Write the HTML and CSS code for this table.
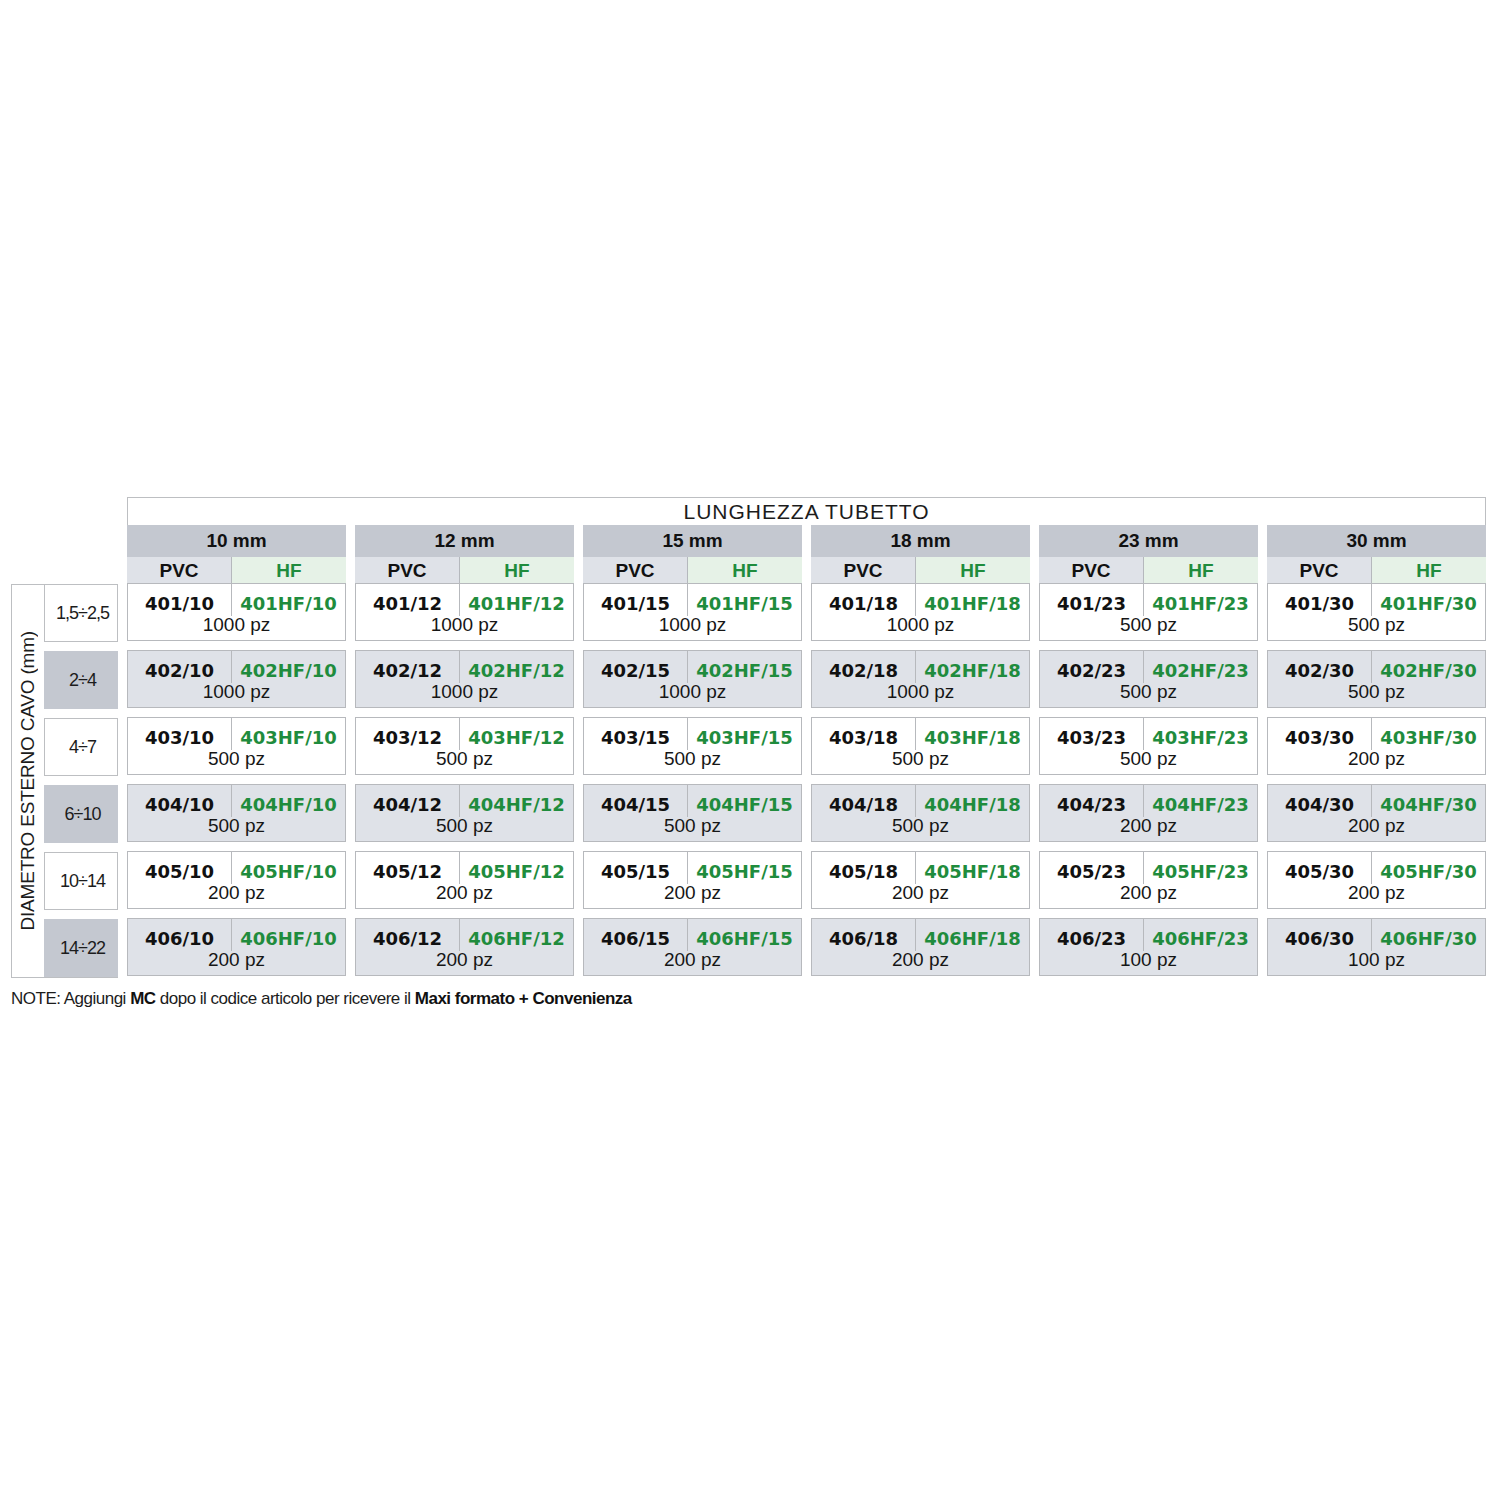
FILE: index.html
```html
<!DOCTYPE html>
<html lang="it">
<head>
<meta charset="utf-8">
<title>Lunghezza tubetto</title>
<link rel="stylesheet" href="styles.css">
</head>
<body>
<div class="table">
  <div class="title-row">
    <div class="spacer"></div>
    <div class="title">LUNGHEZZA TUBETTO</div>
  </div>
  <div class="head-row">
    <div class="spacer-side"></div>
    <div class="ghead"><div class="mm">10 mm</div><div class="sub"><span class="s-pvc">PVC</span><span class="s-hf">HF</span></div></div>
    <div class="ghead"><div class="mm">12 mm</div><div class="sub"><span class="s-pvc">PVC</span><span class="s-hf">HF</span></div></div>
    <div class="ghead"><div class="mm">15 mm</div><div class="sub"><span class="s-pvc">PVC</span><span class="s-hf">HF</span></div></div>
    <div class="ghead"><div class="mm">18 mm</div><div class="sub"><span class="s-pvc">PVC</span><span class="s-hf">HF</span></div></div>
    <div class="ghead"><div class="mm">23 mm</div><div class="sub"><span class="s-pvc">PVC</span><span class="s-hf">HF</span></div></div>
    <div class="ghead"><div class="mm">30 mm</div><div class="sub"><span class="s-pvc">PVC</span><span class="s-hf">HF</span></div></div>
  </div>
  <div class="body">
    <div class="side">
      <div class="vlabel"><span>DIAMETRO ESTERNO CAVO (mm)</span></div>
      <div class="rlabels">
        <div class="rl">1,5÷2,5</div>
        <div class="rl alt">2÷4</div>
        <div class="rl">4÷7</div>
        <div class="rl alt">6÷10</div>
        <div class="rl">10÷14</div>
        <div class="rl alt">14÷22</div>
      </div>
    </div>
    <div class="grid">
      <div class="cell"><div class="codes"><span class="pvc">401/10</span><span class="hf">401HF/10</span></div><div class="qty">1000 pz</div></div>
      <div class="cell"><div class="codes"><span class="pvc">401/12</span><span class="hf">401HF/12</span></div><div class="qty">1000 pz</div></div>
      <div class="cell"><div class="codes"><span class="pvc">401/15</span><span class="hf">401HF/15</span></div><div class="qty">1000 pz</div></div>
      <div class="cell"><div class="codes"><span class="pvc">401/18</span><span class="hf">401HF/18</span></div><div class="qty">1000 pz</div></div>
      <div class="cell"><div class="codes"><span class="pvc">401/23</span><span class="hf">401HF/23</span></div><div class="qty">500 pz</div></div>
      <div class="cell"><div class="codes"><span class="pvc">401/30</span><span class="hf">401HF/30</span></div><div class="qty">500 pz</div></div>

      <div class="cell alt"><div class="codes"><span class="pvc">402/10</span><span class="hf">402HF/10</span></div><div class="qty">1000 pz</div></div>
      <div class="cell alt"><div class="codes"><span class="pvc">402/12</span><span class="hf">402HF/12</span></div><div class="qty">1000 pz</div></div>
      <div class="cell alt"><div class="codes"><span class="pvc">402/15</span><span class="hf">402HF/15</span></div><div class="qty">1000 pz</div></div>
      <div class="cell alt"><div class="codes"><span class="pvc">402/18</span><span class="hf">402HF/18</span></div><div class="qty">1000 pz</div></div>
      <div class="cell alt"><div class="codes"><span class="pvc">402/23</span><span class="hf">402HF/23</span></div><div class="qty">500 pz</div></div>
      <div class="cell alt"><div class="codes"><span class="pvc">402/30</span><span class="hf">402HF/30</span></div><div class="qty">500 pz</div></div>

      <div class="cell"><div class="codes"><span class="pvc">403/10</span><span class="hf">403HF/10</span></div><div class="qty">500 pz</div></div>
      <div class="cell"><div class="codes"><span class="pvc">403/12</span><span class="hf">403HF/12</span></div><div class="qty">500 pz</div></div>
      <div class="cell"><div class="codes"><span class="pvc">403/15</span><span class="hf">403HF/15</span></div><div class="qty">500 pz</div></div>
      <div class="cell"><div class="codes"><span class="pvc">403/18</span><span class="hf">403HF/18</span></div><div class="qty">500 pz</div></div>
      <div class="cell"><div class="codes"><span class="pvc">403/23</span><span class="hf">403HF/23</span></div><div class="qty">500 pz</div></div>
      <div class="cell"><div class="codes"><span class="pvc">403/30</span><span class="hf">403HF/30</span></div><div class="qty">200 pz</div></div>

      <div class="cell alt"><div class="codes"><span class="pvc">404/10</span><span class="hf">404HF/10</span></div><div class="qty">500 pz</div></div>
      <div class="cell alt"><div class="codes"><span class="pvc">404/12</span><span class="hf">404HF/12</span></div><div class="qty">500 pz</div></div>
      <div class="cell alt"><div class="codes"><span class="pvc">404/15</span><span class="hf">404HF/15</span></div><div class="qty">500 pz</div></div>
      <div class="cell alt"><div class="codes"><span class="pvc">404/18</span><span class="hf">404HF/18</span></div><div class="qty">500 pz</div></div>
      <div class="cell alt"><div class="codes"><span class="pvc">404/23</span><span class="hf">404HF/23</span></div><div class="qty">200 pz</div></div>
      <div class="cell alt"><div class="codes"><span class="pvc">404/30</span><span class="hf">404HF/30</span></div><div class="qty">200 pz</div></div>

      <div class="cell"><div class="codes"><span class="pvc">405/10</span><span class="hf">405HF/10</span></div><div class="qty">200 pz</div></div>
      <div class="cell"><div class="codes"><span class="pvc">405/12</span><span class="hf">405HF/12</span></div><div class="qty">200 pz</div></div>
      <div class="cell"><div class="codes"><span class="pvc">405/15</span><span class="hf">405HF/15</span></div><div class="qty">200 pz</div></div>
      <div class="cell"><div class="codes"><span class="pvc">405/18</span><span class="hf">405HF/18</span></div><div class="qty">200 pz</div></div>
      <div class="cell"><div class="codes"><span class="pvc">405/23</span><span class="hf">405HF/23</span></div><div class="qty">200 pz</div></div>
      <div class="cell"><div class="codes"><span class="pvc">405/30</span><span class="hf">405HF/30</span></div><div class="qty">200 pz</div></div>

      <div class="cell alt"><div class="codes"><span class="pvc">406/10</span><span class="hf">406HF/10</span></div><div class="qty">200 pz</div></div>
      <div class="cell alt"><div class="codes"><span class="pvc">406/12</span><span class="hf">406HF/12</span></div><div class="qty">200 pz</div></div>
      <div class="cell alt"><div class="codes"><span class="pvc">406/15</span><span class="hf">406HF/15</span></div><div class="qty">200 pz</div></div>
      <div class="cell alt"><div class="codes"><span class="pvc">406/18</span><span class="hf">406HF/18</span></div><div class="qty">200 pz</div></div>
      <div class="cell alt"><div class="codes"><span class="pvc">406/23</span><span class="hf">406HF/23</span></div><div class="qty">100 pz</div></div>
      <div class="cell alt"><div class="codes"><span class="pvc">406/30</span><span class="hf">406HF/30</span></div><div class="qty">100 pz</div></div>
    </div>
  </div>
  <p class="note">NOTE: Aggiungi <b>MC</b> dopo il codice articolo per ricevere il <b>Maxi formato + Convenienza</b></p>
</div>
</body>
</html>
```

FILE: styles.css
```css
html, body {
  margin: 0;
  padding: 0;
  background: #ffffff;
}

body {
  font-family: "Liberation Sans", Arial, sans-serif;
  color: #161616;
}

.table {
  width: 1475px;
  margin: 497px 0 0 11px;
}

.title-row {
  display: flex;
}

.spacer {
  width: 116px;
  flex: none;
}

.title {
  width: 1359px;
  height: 28px;
  box-sizing: border-box;
  border: 1px solid #bdbfc2;
  border-bottom: none;
  text-align: center;
  font-size: 21px;
  line-height: 28px;
  letter-spacing: 1px;
  color: #1c1c1c;
}

.head-row {
  display: flex;
  gap: 9px;
}

.spacer-side {
  width: 107px;
  flex: none;
}

.ghead {
  width: 219px;
  flex: none;
}

.mm {
  height: 32px;
  background: #c4c8d0;
  text-align: center;
  font-weight: bold;
  font-size: 19px;
  line-height: 32px;
  color: #111;
}

.sub {
  display: flex;
  height: 27px;
  font-weight: bold;
  font-size: 19px;
  line-height: 27px;
  text-align: center;
}

.s-pvc {
  width: 105px;
  flex: none;
  box-sizing: border-box;
  background: #dfe2e8;
  color: #111;
  border-right: 1px solid #b5b8bd;
}

.s-hf {
  flex: 1;
  background: #e6f2e7;
  color: #1f8c3d;
}

.body {
  display: flex;
  gap: 9px;
}

.side {
  width: 107px;
  flex: none;
  display: flex;
  box-sizing: border-box;
  border: 1px solid #bdbfc2;
  border-right: none;
  height: 394px;
}

.vlabel {
  width: 32px;
  flex: none;
  display: flex;
  align-items: center;
  justify-content: center;
}

.vlabel span {
  writing-mode: vertical-rl;
  transform: rotate(180deg);
  font-size: 19px;
  letter-spacing: -0.2px;
  white-space: nowrap;
  color: #1c1c1c;
  line-height: 20px;
}

.rlabels {
  flex: 1;
  display: flex;
  flex-direction: column;
  gap: 9px;
  margin-top: -1px;
  margin-bottom: -1px;
}

.rl {
  height: 58px;
  box-sizing: border-box;
  border: 1px solid #bdbfc2;
  display: flex;
  align-items: center;
  justify-content: center;
  padding-left: 3px;
  font-size: 18px;
  letter-spacing: -1px;
  color: #1c1c1c;
  background: #fff;
}

.rl.alt {
  background: #c4c8d0;
  border-color: #c4c8d0;
}

.grid {
  display: grid;
  grid-template-columns: repeat(6, 219px);
  grid-auto-rows: 58px;
  column-gap: 9px;
  row-gap: 9px;
  margin-top: -1px;
}

.cell {
  box-sizing: border-box;
  border: 1px solid #b7b9bd;
  background: #fff;
}

.cell.alt {
  background: #dfe2e8;
}

.codes {
  display: flex;
  height: 32px;
}

.codes span {
  box-sizing: border-box;
  padding-top: 10px;
  text-align: center;
  font-family: "DejaVu Sans", Verdana, sans-serif;
  font-weight: bold;
  font-size: 18px;
  line-height: 20px;
}

.pvc {
  width: 104px;
  flex: none;
  color: #111;
  border-right: 1px solid #b7b9bd;
}

.hf {
  flex: 1;
  color: #1f8c3d;
}

.qty {
  text-align: center;
  font-size: 19px;
  line-height: 18px;
  color: #161616;
}

.note {
  margin: 11px 0 0 0;
  font-size: 17px;
  line-height: 20px;
  letter-spacing: -0.5px;
  color: #1c1c1c;
}

.note b {
  font-weight: bold;
  color: #111;
}
```
